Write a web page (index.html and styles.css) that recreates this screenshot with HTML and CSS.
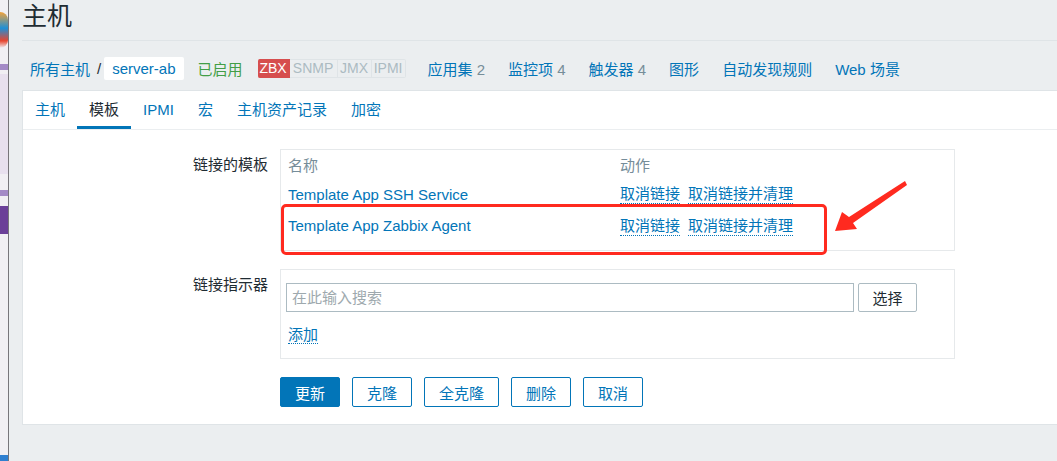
FILE: index.html
```html
<!DOCTYPE html>
<html lang="zh-CN">
<head>
    <meta charset="UTF-8">
    <title>主机</title>
    <link rel="stylesheet" href="styles.css">
</head>
<body>

<div class="screen">
    <!-- trozo de la otra ventana, a la izquierda -->
    <div class="side-strip">
        <div class="strip-logo"></div>
        <div class="strip-line"></div>
        <div class="strip-menu"></div>
        <div class="strip-line"></div>
        <div class="strip-dark"></div>
        <div class="strip-rest"></div>
        <div class="strip-blue"></div>
    </div>

    <div class="page">
        <header class="page-header">
            <h1>主机</h1>
        </header>

        <nav class="host-nav">
            <a href="#" class="crumb">所有主机</a>
            <span class="crumb-sep">/</span>
            <span class="crumb-current">server-ab</span>
            <span class="status-on">已启用</span>
            <div class="avail">
                <span class="avail-item avail-zbx">ZBX</span>
                <span class="avail-item avail-snmp">SNMP</span>
                <span class="avail-item">JMX</span>
                <span class="avail-item">IPMI</span>
            </div>
            <a href="#" class="nav-link">应用集 <span class="count">2</span></a>
            <a href="#" class="nav-link">监控项 <span class="count">4</span></a>
            <a href="#" class="nav-link">触发器 <span class="count">4</span></a>
            <a href="#" class="nav-link">图形</a>
            <a href="#" class="nav-link">自动发现规则</a>
            <a href="#" class="nav-link">Web 场景</a>
        </nav>

        <div class="panel">
            <ul class="tabs">
                <li><a href="#">主机</a></li>
                <li class="active"><a href="#">模板</a></li>
                <li><a href="#">IPMI</a></li>
                <li><a href="#">宏</a></li>
                <li><a href="#">主机资产记录</a></li>
                <li><a href="#">加密</a></li>
            </ul>

            <form class="form">
                <div class="form-row">
                    <label class="form-label">链接的模板</label>
                    <div class="box">
                        <div class="tpl-row tpl-head">
                            <span>名称</span>
                            <span>动作</span>
                        </div>
                        <div class="tpl-row tpl-first">
                            <a href="#">Template App SSH Service</a>
                            <span class="actions">
                                <a href="#" class="dotted">取消链接</a>
                                <a href="#" class="dotted">取消链接并清理</a>
                            </span>
                        </div>
                        <div class="tpl-row tpl-second">
                            <a href="#">Template App Zabbix Agent</a>
                            <span class="actions">
                                <a href="#" class="dotted">取消链接</a>
                                <a href="#" class="dotted">取消链接并清理</a>
                            </span>
                        </div>
                    </div>
                </div>

                <div class="form-row">
                    <label class="form-label">链接指示器</label>
                    <div class="box box-link">
                        <div class="search-line">
                            <input type="text" class="search-input" placeholder="在此输入搜索">
                            <button type="button" class="btn-select">选择</button>
                        </div>
                        <a href="#" class="dotted add-link">添加</a>
                    </div>
                </div>

                <div class="form-actions">
                    <button type="button" class="btn btn-main">更新</button>
                    <button type="button" class="btn">克隆</button>
                    <button type="button" class="btn">全克隆</button>
                    <button type="button" class="btn">删除</button>
                    <button type="button" class="btn">取消</button>
                </div>
            </form>
        </div>
    </div>
</div>

<!-- marcas rojas de la captura -->
<div class="mark-box"></div>
<svg class="mark-arrow" width="1057" height="461" viewBox="0 0 1057 461">
    <polygon points="835,231 842,212 849,217 905,181 907,185 853,223 857,229" fill="#ff2a1f"/>
</svg>

</body>
</html>
```

FILE: styles.css
```css
/* Estilos base */
body {
    margin: 0;
    font-family: "Liberation Sans", "Noto Sans CJK SC", sans-serif;
    font-size: 15px;
    color: #1f2c33;
    background-color: #ebeef0;
    overflow: hidden;
}

a {
    color: #0275b8;
    text-decoration: none;
}

.screen {
    display: flex;
    height: 461px;
}

/* Franja de la otra ventana */
.side-strip {
    width: 8px;
    flex-shrink: 0;
    border-right: 1px solid #77757a;
    background-color: #f1eff3;
    display: flex;
    flex-direction: column;
}

.strip-logo {
    height: 36px;
    margin-top: 12px;
    background: linear-gradient(180deg, #f2a23a 0%, #1e8fd6 45%, #e8452f 80%, #f1eff3 100%);
    border-radius: 0 10px 10px 0;
}

.strip-line {
    height: 6px;
    margin-top: 16px;
    background-color: #a48ac6;
}

.strip-menu {
    height: 100px;
    margin-top: 4px;
    background-color: #e8e0ee;
}

.strip-dark {
    height: 28px;
    margin-top: 10px;
    background-color: #6b3f98;
}

.strip-rest {
    flex: 1;
}

.strip-blue {
    height: 6px;
    background-color: #2f7fd0;
}

/* Página */
.page {
    flex: 1;
    padding-left: 13px;
    min-width: 0;
}

.page-header {
    height: 40px;
    border-bottom: 1px solid #dfe4e7;
}

h1 {
    margin: 0;
    font-size: 25px;
    font-weight: normal;
    line-height: 32px;
}

/* Navegación del host */
.host-nav {
    display: flex;
    align-items: center;
    height: 23px;
    margin-top: 16px;
    padding-left: 8px;
    white-space: nowrap;
}

.crumb-sep {
    margin: 0 3px 0 7px;
}

.crumb-current {
    background-color: #fff;
    color: #0275b8;
    height: 23px;
    line-height: 23px;
    padding: 0 8px;
    border-radius: 2px;
}

.status-on {
    color: #429e47;
    margin-left: 14px;
}

.avail {
    display: flex;
    margin-left: 15px;
    font-size: 14px;
}

.avail-item {
    width: 34px;
    height: 19px;
    line-height: 17px;
    text-align: center;
    border: 1px solid #dfe4e7;
    border-left: none;
    color: #acbbc2;
    box-sizing: border-box;
}

.avail-item:last-child {
    border-radius: 0 2px 2px 0;
}

.avail-zbx {
    width: 32px;
    background-color: #d64e4e;
    border-color: #d64e4e;
    color: #fff;
    border-radius: 2px 0 0 2px;
}

.avail-snmp {
    width: 48px;
}

.nav-link {
    margin-left: 23px;
}

.avail + .nav-link {
    margin-left: 22px;
}

.count {
    color: #768d99;
}

/* Panel blanco */
.panel {
    margin-top: 10px;
    background-color: #fff;
    border: 1px solid #dfe4e7;
    border-right: none;
    height: 333px;
}

.tabs {
    display: flex;
    margin: 0;
    padding: 0;
    list-style: none;
    border-bottom: 1px solid #ebeef0;
}

.tabs a {
    display: block;
    padding: 0 12px;
    height: 38px;
    line-height: 38px;
}

.tabs .active a {
    color: #1f2c33;
    box-shadow: inset 0 -3px 0 #0275b8;
}

/* Formulario */
.form {
    padding-top: 19px;
}

.form-row {
    display: grid;
    grid-template-columns: 245px 675px;
    column-gap: 12px;
    margin-bottom: 18px;
}

.form-label {
    text-align: right;
    padding-top: 7px;
    line-height: 18px;
}

.box {
    border: 1px solid #e6e9eb;
    box-sizing: border-box;
}

.tpl-row {
    display: grid;
    grid-template-columns: 332px auto;
    padding-left: 7px;
    align-items: center;
    line-height: 18px;
}

.tpl-head {
    height: 31px;
    color: #768d99;
}

.tpl-first {
    height: 27px;
}

.tpl-second {
    height: 36px;
    margin-bottom: 6px;
}

.actions {
    display: flex;
    gap: 8px;
}

.dotted {
    border-bottom: 1px dotted #0275b8;
}

.box-link {
    padding: 13px 7px 14px 5px;
}

.search-line {
    display: flex;
    height: 29px;
}

.search-input {
    width: 568px;
    height: 29px;
    box-sizing: border-box;
    border: 1px solid #acbbc2;
    padding: 0 5px;
    font-family: inherit;
    font-size: 15px;
    color: #1f2c33;
    outline: none;
}

.search-input::placeholder {
    color: #9ea9ae;
}

.btn-select {
    margin-left: 4px;
    width: 59px;
    height: 29px;
    border: 1px solid #acbbc2;
    border-radius: 2px;
    background-color: #fff;
    color: #1f2c33;
    font-family: inherit;
    font-size: 15px;
    padding: 0;
}

.add-link {
    display: inline-block;
    margin: 14px 0 0 2px;
    line-height: 17px;
}

.form-actions {
    display: flex;
    gap: 12px;
    margin-left: 257px;
}

.btn {
    height: 30px;
    padding: 0 14px;
    border: 1px solid #0275b8;
    border-radius: 2px;
    background-color: #fff;
    color: #0275b8;
    font-family: inherit;
    font-size: 15px;
}

.btn-main {
    background-color: #0275b8;
    color: #fff;
}

/* Marcas rojas */
.mark-box {
    position: absolute;
    left: 281px;
    top: 204px;
    width: 546px;
    height: 51px;
    box-sizing: border-box;
    border: 3px solid #ff2a1f;
    border-radius: 5px;
}

.mark-arrow {
    position: absolute;
    left: 0;
    top: 0;
    pointer-events: none;
}
```
